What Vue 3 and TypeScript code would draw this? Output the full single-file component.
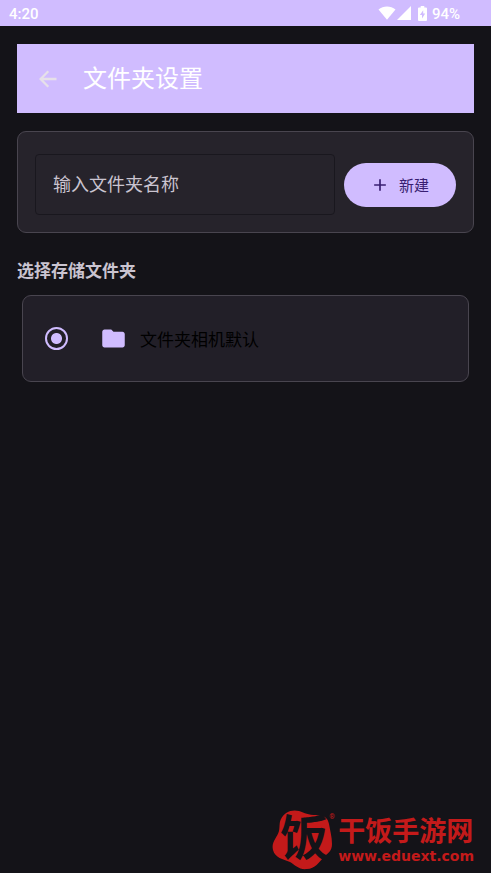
<script setup lang="ts">
import { ref } from 'vue'

interface Folder {
  id: string
  name: string
}

const folderName = ref('')
const folders = ref<Folder[]>([{ id: 'default', name: '文件夹相机默认' }])
const selected = ref('default')

function createFolder(): void {
  const name = folderName.value.trim()
  if (!name) return
  folders.value.push({ id: `folder-${folders.value.length}`, name })
  folderName.value = ''
}
</script>

<template>
  <div class="screen">
    <div class="status">
      <span>4:20</span>
      <div class="status-icons">
        <svg width="18" height="14" viewBox="0 0 18 14" aria-hidden="true">
          <path d="M0.5 3.6C5.2-0.5 12.8-0.5 17.5 3.6L9 13.8Z" />
        </svg>
        <svg width="14" height="14" viewBox="0 0 14 14" aria-hidden="true">
          <path d="M14 0V14H0Z" />
        </svg>
        <svg class="battery" width="9" height="15" viewBox="0 0 9 15" aria-hidden="true">
          <path fill-rule="evenodd" d="M2.7 0H6.3V1.6H8Q9 1.6 9 2.6V14Q9 15 8 15H1Q0 15 0 14V2.6Q0 1.6 1 1.6H2.7ZM5.2 4.2L1.9 9H4V12.6L7.2 7.6H5.2Z" />
        </svg>
        <span>94%</span>
      </div>
    </div>

    <main class="content">
      <header class="toolbar">
        <button class="back" type="button" aria-label="返回">
          <svg width="24" height="24" viewBox="0 0 24 24" aria-hidden="true">
            <path d="M20.5 10.8H7.4l5.7-5.7L11.5 3.5 3 12l8.500 8.500 1.600-1.600L7.400 13.200H20.500z" />
          </svg>
        </button>
        <h1>文件夹设置</h1>
      </header>

      <form class="card create" @submit.prevent="createFolder">
        <input v-model="folderName" class="name" type="text" placeholder="输入文件夹名称" aria-label="输入文件夹名称" />
        <button class="add" type="submit">
          <svg width="20" height="20" viewBox="0 0 24 24" aria-hidden="true">
            <path d="M19 13h-6v6h-2v-6H5v-2h6V5h2v6h6z" />
          </svg>
          新建
        </button>
      </form>

      <h2>选择存储文件夹</h2>

      <div class="list">
        <label v-for="folder in folders" :key="folder.id" class="card folder">
          <input v-model="selected" type="radio" name="folder" :value="folder.id" />
          <svg width="27" height="27" viewBox="0 0 24 24" aria-hidden="true">
            <path d="M10 4H4c-1.100 0-2 .9-2 2v12c0 1.100.9 2 2 2h16c1.100 0 2-.9 2-2V8c0-1.100-.9-2-2-2h-8z" />
          </svg>
          <span>{{ folder.name }}</span>
        </label>
      </div>
    </main>

    <footer class="brand">
      <div class="seal">
        <svg width="62" height="62" viewBox="0 0 62 62" aria-hidden="true">
          <path d="M9 10C12 3 20 0 27 2C33 4 36 6 44 6C52 6 56 9 57 15C58 21 60 28 60 35C60 42 56 44 52 48C47 53 43 60 35 60C27 61 23 56 18 53C11 50 3 49 1 41C-1 33 5 29 7 22C8 17 7 14 9 10Z" />
        </svg>
        <span class="seal-char">饭</span>
        <span class="mark">®</span>
      </div>
      <div class="brand-text">
        <strong>干饭手游网</strong>
        <span>www.eduext.com</span>
      </div>
    </footer>
  </div>
</template>

<style>
body {
  margin: 0;
  background: #141318;
}
</style>

<style scoped>
.screen {
  box-sizing: border-box;
  min-height: 100vh;
  display: flex;
  flex-direction: column;
  background: #141318;
  color: #cac4d0;
  font-family: Roboto, "Noto Sans CJK SC", sans-serif;
}

.status {
  height: 26px;
  padding: 0 31px 0 9px;
  display: flex;
  align-items: center;
  justify-content: space-between;
  background: #d0bcff;
  color: #fff;
  font-size: 15px;
  font-weight: 500;
  line-height: 26px;
}

.status > span,
.status-icons > span {
  padding-top: 2px;
}

.status-icons {
  display: flex;
  align-items: center;
  gap: 1px;
}

.battery {
  margin: 0 4px 0 6px;
}

svg {
  display: block;
  flex: none;
  fill: currentColor;
}

.content {
  padding: 18px 17px;
}

.toolbar {
  height: 69px;
  padding: 0 19px;
  display: flex;
  align-items: center;
  gap: 23px;
  background: #d0bcff;
  color: #fff;
}

.back {
  padding: 0;
  border: 0;
  background: none;
  color: #e6e0e9;
}

h1 {
  margin: 0;
  font-size: 24px;
  font-weight: 400;
  line-height: 32px;
}

.card {
  box-sizing: border-box;
  display: flex;
  align-items: center;
  border: 1px solid #49454f;
  border-radius: 9px;
}

.create {
  margin-top: 18px;
  padding: 22px 17px 17px;
  gap: 9px;
  background: #26232b;
}

.name {
  box-sizing: border-box;
  flex: 1;
  min-width: 0;
  height: 61px;
  padding: 0 17px;
  border: 1px solid #19171e;
  border-radius: 4px;
  outline: 0;
  background: transparent;
  color: #e6e0e9;
  font: inherit;
  font-size: 18px;
}

.name::placeholder {
  color: #cac4d0;
  opacity: 1;
}

.add {
  height: 44px;
  padding: 0 27px 0 26px;
  display: flex;
  align-items: center;
  gap: 9px;
  border: 0;
  border-radius: 22px;
  background: #d0bcff;
  color: #381e72;
  font: inherit;
  font-size: 15px;
}

h2 {
  margin: 25px 0 0;
  font-size: 17px;
  font-weight: 700;
  line-height: 26px;
}

.list {
  margin-top: 11px;
  padding: 0 5px;
  display: grid;
  gap: 9px;
}

.folder {
  min-height: 87px;
  padding: 0 22px;
  background: #221f28;
  color: #000;
  font-size: 17px;
}

.folder input {
  appearance: none;
  box-sizing: border-box;
  width: 23px;
  height: 23px;
  margin: 0 32px 0 0;
  border: 2px solid #d0bcff;
  border-radius: 50%;
}

.folder input:checked {
  background: radial-gradient(circle, #d0bcff 5px, transparent 6px);
}

.folder svg {
  margin-right: 13px;
  color: #d0bcff;
}

.brand {
  margin-top: auto;
  padding: 0 17px 2px;
  display: flex;
  justify-content: flex-end;
  align-items: center;
  gap: 4px;
  color: #c41a1a;
}

.seal {
  position: relative;
}

.seal-char {
  position: absolute;
  top: 0;
  left: 8px;
  color: #141318;
  font-size: 48px;
  font-weight: 700;
  line-height: 60px;
}

.mark {
  position: absolute;
  top: 2px;
  left: 57px;
  font-size: 7px;
  line-height: 12px;
}

.brand-text {
  display: flex;
  flex-direction: column;
}

.brand-text strong {
  font-size: 27px;
  font-weight: 700;
  line-height: 32px;
}

.brand-text span {
  font-family: "DejaVu Sans", sans-serif;
  font-size: 14px;
  font-weight: 700;
  line-height: 16px;
}
</style>
